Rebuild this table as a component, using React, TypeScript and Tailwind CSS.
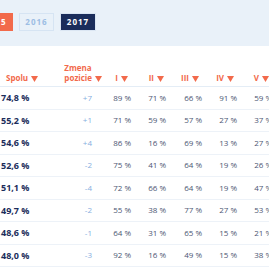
import React from "react";

const rows = [
  ["74,8 %", "+7", "89 %", "71 %", "66 %", "91 %", "59 %"],
  ["55,2 %", "+1", "71 %", "59 %", "57 %", "27 %", "37 %"],
  ["54,6 %", "+4", "86 %", "16 %", "69 %", "13 %", "27 %"],
  ["52,6 %", "-2", "75 %", "41 %", "64 %", "19 %", "26 %"],
  ["51,1 %", "-4", "72 %", "66 %", "64 %", "19 %", "47 %"],
  ["49,7 %", "-2", "55 %", "38 %", "77 %", "27 %", "53 %"],
  ["48,6 %", "-1", "64 %", "31 %", "65 %", "15 %", "21 %"],
  ["48,0 %", "-3", "92 %", "16 %", "49 %", "15 %", "38 %"],
];

function Arrow() {
  return (
    <svg width="7" height="6" viewBox="0 0 7 6" className="ml-[3px] inline-block">
      <path d="M0 0h7L3.5 6z" fill="#f26a4b" />
    </svg>
  );
}

export default function App() {
  return (
    <div
      className="h-[269px] w-[269px] overflow-hidden bg-white"
      style={{ fontFamily: "'Open Sans', 'Liberation Sans', sans-serif" }}
    >
      {/* Roky */}
      <div className="flex h-[46px] items-start gap-[6px] bg-[#e9f1f9] pt-[13px] -ml-[22px]">
        <button className="h-[18px] w-[35px] bg-[#f26a4b] text-[8px] font-bold tracking-[1px] text-white">
          2015
        </button>
        <button className="h-[18px] w-[35px] border border-[#d6e4f3] text-[8px] font-bold tracking-[1px] text-[#9cbde4]">
          2016
        </button>
        <button className="h-[18px] w-[36px] border border-[#dbe6f3] bg-[#1b2d5b] text-[8px] font-bold tracking-[1px] text-white">
          2017
        </button>
      </div>

      {/* Hlavicka */}
      <div className="flex h-[41px] items-end border-b border-[#e4edf6] pb-[3px] text-[8px] font-bold leading-[10px] text-[#f26a4b]">
        <div className="w-[67px] pl-[6px]">
          Spolu
          <Arrow />
        </div>
        <div className="w-[38px] whitespace-nowrap">
          Zmena
          <br />
          pozicie
          <Arrow />
        </div>
        <div className="w-[26px] shrink-0 text-right">
          I<Arrow />
        </div>
        <div className="w-[36px] shrink-0 text-right">
          II<Arrow />
        </div>
        <div className="w-[35px] shrink-0 text-right">
          III<Arrow />
        </div>
        <div className="w-[35px] shrink-0 text-right">
          IV<Arrow />
        </div>
        <div className="w-[35px] shrink-0 text-right">
          V<Arrow />
        </div>
      </div>

      {/* Riadky */}
      {rows.map((r, i) => (
        <div
          key={i}
          className="flex h-[22.5px] items-center border-b border-[#edf2f8] whitespace-nowrap"
        >
          <div className="w-[50px] shrink-0 pl-[1px] text-[9px] font-bold text-[#1b2d5b]">
            {r[0]}
          </div>
          <div className="w-[42px] shrink-0 text-right text-[8px] text-[#86aee0]">
            {r[1]}
          </div>
          {r.slice(2).map((v, j) => (
            <div
              key={j}
              className={`${j === 0 ? "w-[39px]" : j === 2 ? "w-[36px]" : "w-[35px]"} shrink-0 text-right text-[8px] text-[#4b5672]`}
            >
              {v}
            </div>
          ))}
        </div>
      ))}
    </div>
  );
}
